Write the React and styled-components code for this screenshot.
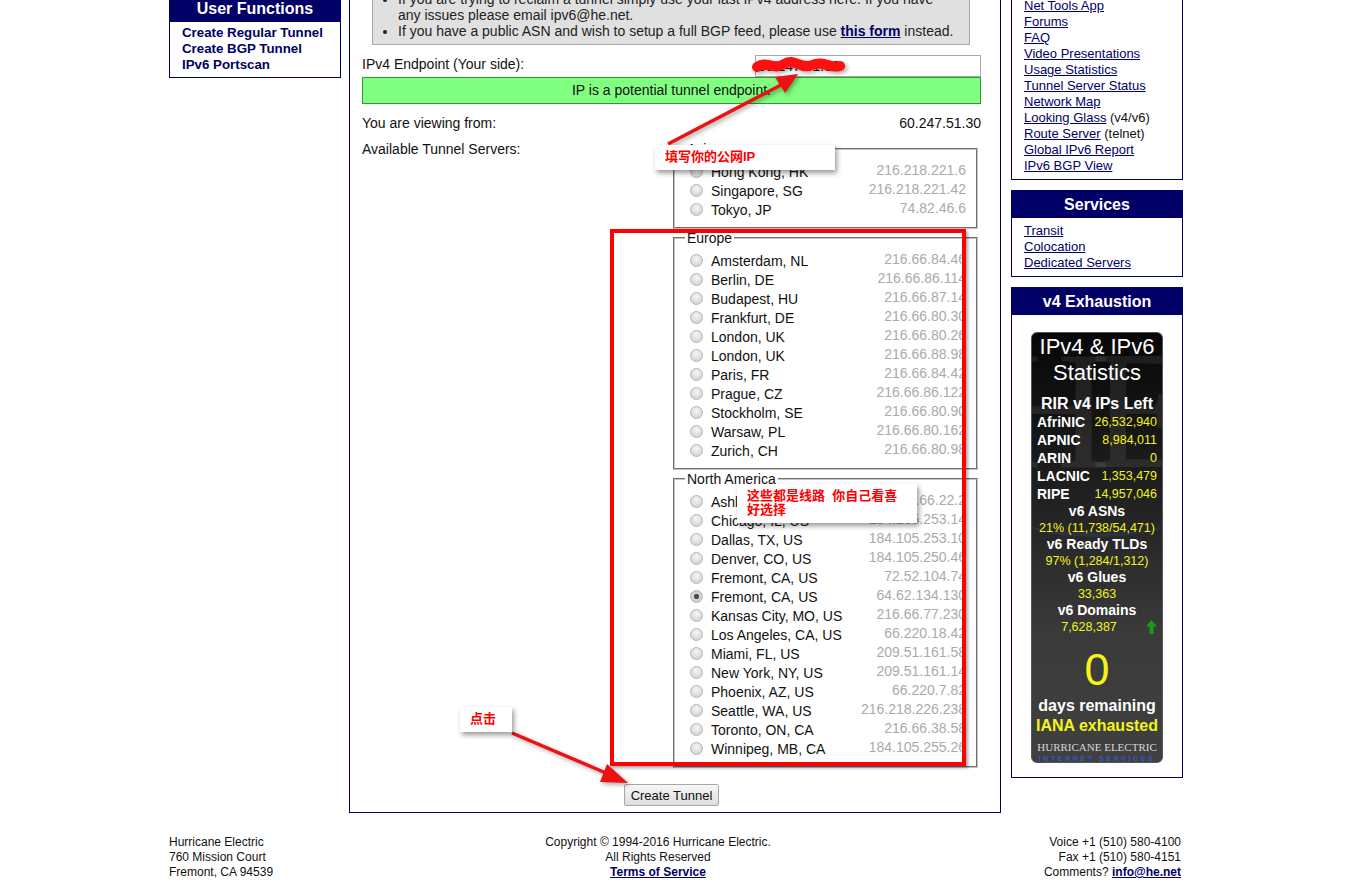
import React from "react";
import styled, { createGlobalStyle } from "styled-components";

const NAVY = "#000066";

const asia = [
    ["Hong Kong, HK", "216.218.221.6"],
    ["Singapore, SG", "216.218.221.42"],
    ["Tokyo, JP", "74.82.46.6"],
];

const europe = [
    ["Amsterdam, NL", "216.66.84.46"],
    ["Berlin, DE", "216.66.86.114"],
    ["Budapest, HU", "216.66.87.14"],
    ["Frankfurt, DE", "216.66.80.30"],
    ["London, UK", "216.66.80.26"],
    ["London, UK", "216.66.88.98"],
    ["Paris, FR", "216.66.84.42"],
    ["Prague, CZ", "216.66.86.122"],
    ["Stockholm, SE", "216.66.80.90"],
    ["Warsaw, PL", "216.66.80.162"],
    ["Zurich, CH", "216.66.80.98"],
];

const northAmerica = [
    ["Ashburn, VA, US", "216.66.22.2"],
    ["Chicago, IL, US", "184.105.253.14"],
    ["Dallas, TX, US", "184.105.253.10"],
    ["Denver, CO, US", "184.105.250.46"],
    ["Fremont, CA, US", "72.52.104.74"],
    ["Fremont, CA, US", "64.62.134.130", true],
    ["Kansas City, MO, US", "216.66.77.230"],
    ["Los Angeles, CA, US", "66.220.18.42"],
    ["Miami, FL, US", "209.51.161.58"],
    ["New York, NY, US", "209.51.161.14"],
    ["Phoenix, AZ, US", "66.220.7.82"],
    ["Seattle, WA, US", "216.218.226.238"],
    ["Toronto, ON, CA", "216.66.38.58"],
    ["Winnipeg, MB, CA", "184.105.255.26"],
];

const rirs = [
    ["AfriNIC", "26,532,940"],
    ["APNIC", "8,984,011"],
    ["ARIN", "0"],
    ["LACNIC", "1,353,479"],
    ["RIPE", "14,957,046"],
];

const toolLinks = [
    ["Net Tools App"],
    ["Forums"],
    ["FAQ"],
    ["Video Presentations"],
    ["Usage Statistics"],
    ["Tunnel Server Status"],
    ["Network Map"],
    ["Looking Glass", "(v4/v6)"],
    ["Route Server", "(telnet)"],
    ["Global IPv6 Report"],
    ["IPv6 BGP View"],
];

const ServerGroup = ({ title, servers }) => {
    return (
        <Fieldset>
            <Legend>{title}</Legend>
            {servers.map(([city, ip, checked], idx) => (
                <ServerRow key={idx}>
                    <Radio type="radio" name="server" defaultChecked={!!checked} />
                    <City>{city}</City>
                    <ServerIp>{ip}</ServerIp>
                </ServerRow>
            ))}
        </Fieldset>
    );
};

const App = () => {
    return (
        <Screen>
            <GlobalStyle />
            <Page>
                <Columns>
                    <LeftColumn>
                        <SideBox $first>
                            <BoxHeader>User Functions</BoxHeader>
                            <FunctionList>
                                <FunctionLink>Create Regular Tunnel</FunctionLink>
                                <FunctionLink>Create BGP Tunnel</FunctionLink>
                                <FunctionLink>IPv6 Portscan</FunctionLink>
                            </FunctionList>
                        </SideBox>
                    </LeftColumn>

                    <MainColumn>
                        <Notice>
                            <li>
                                If you are trying to reclaim a tunnel simply use your last IPv4 address here. If you have
                                <br />
                                any issues please email ipv6@he.net.
                            </li>
                            <li>
                                If you have a public ASN and wish to setup a full BGP feed, please use{" "}
                                <StrongLink>this form</StrongLink> instead.
                            </li>
                        </Notice>

                        <EndpointRow>
                            <FormLabel>IPv4 Endpoint (Your side):</FormLabel>
                            <EndpointInput defaultValue="60.247.51.30" />
                        </EndpointRow>
                        <StatusBar>IP is a potential tunnel endpoint.</StatusBar>

                        <InfoRow $gap={11}>
                            <span>You are viewing from:</span>
                            <span>60.247.51.30</span>
                        </InfoRow>

                        <InfoRow $gap={10}>
                            <span>Available Tunnel Servers:</span>
                            <ServerColumn>
                                <ServerGroup title="Asia" servers={asia} />
                                <ServerGroup title="Europe" servers={europe} />
                                <ServerGroup title="North America" servers={northAmerica} />
                            </ServerColumn>
                        </InfoRow>

                        <ButtonRow>
                            <SubmitButton type="button">Create Tunnel</SubmitButton>
                        </ButtonRow>
                    </MainColumn>

                    <RightColumn>
                        <SideBox $first>
                            <LinkList $top={9}>
                                {toolLinks.map(([label, note]) => (
                                    <LinkItem key={label}>
                                        <SideLink>{label}</SideLink>
                                        {note && <> {note}</>}
                                    </LinkItem>
                                ))}
                            </LinkList>
                        </SideBox>

                        <SideBox>
                            <BoxHeader>Services</BoxHeader>
                            <LinkList $top={5}>
                                <LinkItem>
                                    <SideLink>Transit</SideLink>
                                </LinkItem>
                                <LinkItem>
                                    <SideLink>Colocation</SideLink>
                                </LinkItem>
                                <LinkItem>
                                    <SideLink>Dedicated Servers</SideLink>
                                </LinkItem>
                            </LinkList>
                        </SideBox>

                        <SideBox>
                            <BoxHeader>v4 Exhaustion</BoxHeader>
                            <WidgetHolder>
                                <StatsWidget>
                                    <Watermark aria-hidden="true">HE</Watermark>
                                    <Swoosh />
                                    <WidgetTitle>
                                        IPv4 &amp; IPv6
                                        <br />
                                        Statistics
                                    </WidgetTitle>
                                    <StatHeading $size={16} $top={9}>
                                        RIR v4 IPs Left
                                    </StatHeading>
                                    {rirs.map(([name, count]) => (
                                        <RirRow key={name}>
                                            <RirName>{name}</RirName>
                                            <Yellow>{count}</Yellow>
                                        </RirRow>
                                    ))}
                                    <StatHeading $size={14}>v6 ASNs</StatHeading>
                                    <StatValue>21% (11,738/54,471)</StatValue>
                                    <StatHeading $size={14}>v6 Ready TLDs</StatHeading>
                                    <StatValue>97% (1,284/1,312)</StatValue>
                                    <StatHeading $size={14}>v6 Glues</StatHeading>
                                    <StatValue>33,363</StatValue>
                                    <StatHeading $size={14}>v6 Domains</StatHeading>
                                    <TrendRow>
                                        <StatValue>7,628,387</StatValue>
                                        <svg width="11" height="14" viewBox="0 0 11 14">
                                            <path d="M5.5 0 L11 6.5 L7.5 6.5 L7.5 14 L3.5 14 L3.5 6.5 L0 6.5 Z" fill="#1a9a1a" />
                                        </svg>
                                    </TrendRow>
                                    <BigZero>0</BigZero>
                                    <DaysText $top={1}>days remaining</DaysText>
                                    <DaysText $yellow>IANA exhausted</DaysText>
                                    <BrandName>HURRICANE ELECTRIC</BrandName>
                                    <BrandSub>INTERNET SERVICES</BrandSub>
                                </StatsWidget>
                            </WidgetHolder>
                        </SideBox>
                    </RightColumn>
                </Columns>

                <Footer>
                    <FooterCell>
                        Hurricane Electric
                        <br />
                        760 Mission Court
                        <br />
                        Fremont, CA 94539
                    </FooterCell>
                    <FooterCell $align="center">
                        Copyright © 1994-2016 Hurricane Electric.
                        <br />
                        All Rights Reserved
                        <br />
                        <StrongLink>Terms of Service</StrongLink>
                    </FooterCell>
                    <FooterCell $align="right">
                        Voice +1 (510) 580-4100
                        <br />
                        Fax +1 (510) 580-4151
                        <br />
                        Comments? <StrongLink>info@he.net</StrongLink>
                    </FooterCell>
                </Footer>
            </Page>

            <Highlight />
            <Arrows width="1348" height="888" viewBox="0 0 1348 888">
                <path
                    d="M757 67 C 766 60, 774 71, 784 64 S 800 70, 812 65 S 830 69, 840 66"
                    fill="none"
                    stroke="#ff1010"
                    strokeWidth="10"
                    strokeLinecap="round"
                />
                <line x1="668" y1="144" x2="781" y2="85" stroke="#ee1111" strokeWidth="3.5" />
                <polygon points="798,74 785,93 775,77" fill="#ee1111" />
                <line x1="512" y1="733" x2="606" y2="773" stroke="#ee1111" strokeWidth="3.5" />
                <polygon points="628,783 600,782 607,764" fill="#ee1111" />
            </Arrows>
            <Callout $x={655} $y={145} $w={180}>
                填写你的公网IP
            </Callout>
            <Callout $x={737} $y={484} $w={180}>
                这些都是线路&nbsp;&nbsp;你自己看喜
                <br />
                好选择
            </Callout>
            <Callout $x={460} $y={707} $w={52}>
                点击
            </Callout>
        </Screen>
    );
};

export default App;

const GlobalStyle = createGlobalStyle`
    html, body {
        margin: 0;
        padding: 0;
        background: #ffffff;
    }
    body {
        font-family: "Liberation Sans", Arial, sans-serif;
        color: #000;
        overflow: hidden;
    }
`;

const Screen = styled.div`
    position: relative;
    width: 1348px;
    height: 888px;
    overflow: hidden;
`;

const Page = styled.div`
    width: 1014px;
    margin-left: 169px;
`;

const Columns = styled.div`
    display: flex;
    align-items: flex-start;
`;

const LeftColumn = styled.div`
    width: 172px;
    margin: -6px 8px 0 0;
`;

const RightColumn = styled.div`
    width: 172px;
    margin: -12px 0 0 10px;
`;

const SideBox = styled.div`
    box-sizing: border-box;
    width: 172px;
    border: 1px solid ${NAVY};
    margin-top: ${(p) => (p.$first ? 0 : 10)}px;
`;

const BoxHeader = styled.div`
    height: 27px;
    line-height: 27px;
    background: ${NAVY};
    color: #fff;
    text-align: center;
    font-size: 16px;
    font-weight: 700;
`;

const FunctionList = styled.div`
    display: flex;
    flex-direction: column;
    padding: 3px 0 4px 12px;
`;

const FunctionLink = styled.span`
    font-size: 13.3px;
    line-height: 16px;
    font-weight: 700;
    color: ${NAVY};
`;

const LinkList = styled.div`
    display: flex;
    flex-direction: column;
    align-items: flex-start;
    padding: ${(p) => p.$top}px 0 5px 12px;
`;

const LinkItem = styled.div`
    font-size: 13px;
    line-height: 16px;
    color: #111;
    white-space: nowrap;
`;

const SideLink = styled.span`
    color: ${NAVY};
    text-decoration: underline;
`;

const MainColumn = styled.div`
    box-sizing: border-box;
    width: 652px;
    margin-top: -20px;
    padding: 0 19px 6px 12px;
    border: 1px solid ${NAVY};
    border-top: none;
    font-size: 14px;
    color: #111;
`;

const Notice = styled.ul`
    margin: 0 11px 0 10px;
    padding: 10px 8px 5px 25px;
    background: #e0e0e0;
    border: 1px solid #a8a8a8;
    font-size: 14px;
    line-height: 16px;
    color: #222;
    white-space: nowrap;
`;

const StrongLink = styled.span`
    font-weight: 700;
    color: ${NAVY};
    text-decoration: underline;
`;

const EndpointRow = styled.div`
    display: flex;
    justify-content: space-between;
    align-items: flex-start;
    margin-top: 10px;
`;

const FormLabel = styled.span`
    line-height: 18px;
`;

const EndpointInput = styled.input`
    box-sizing: border-box;
    width: 226px;
    height: 22px;
    border: 1px solid #a9a9a9;
    padding: 0 2px;
    font-family: "Liberation Sans", Arial, sans-serif;
    font-size: 14px;
    color: #111;
`;

const StatusBar = styled.div`
    box-sizing: border-box;
    height: 27px;
    line-height: 25px;
    background: #80ff80;
    border: 1px solid #2d9a2d;
    text-align: center;
    color: #111;
`;

const InfoRow = styled.div`
    display: flex;
    justify-content: space-between;
    align-items: flex-start;
    margin-top: ${(p) => p.$gap}px;
    line-height: 16px;
`;

const ServerColumn = styled.div`
    width: 305px;
    margin-right: 3px;
`;

const Fieldset = styled.fieldset`
    margin: 1px 0 0;
    padding: 5px 10px 8px;
    border: 2px groove #c4c4c4;
    min-width: 0;
    &:first-child {
        margin-top: 0;
    }
`;

const Legend = styled.legend`
    padding: 0 2px;
    font-size: 14px;
    line-height: 16px;
    color: #111;
`;

const ServerRow = styled.div`
    display: flex;
    align-items: center;
    height: 19px;
`;

const Radio = styled.input`
    appearance: none;
    box-sizing: border-box;
    width: 13px;
    height: 13px;
    margin: 0 8px 0 5px;
    border-radius: 50%;
    border: 1px solid #b4b4b4;
    background: radial-gradient(circle at 50% 35%, #f6f6f6 0%, #d6d6d6 75%, #c4c4c4 100%);
    flex-shrink: 0;
    &:checked {
        background: radial-gradient(circle, #444 0, #555 2.4px, #d8d8d8 3px, #c6c6c6 100%);
    }
`;

const City = styled.span`
    color: #111;
    white-space: nowrap;
`;

const ServerIp = styled.span`
    margin: 0 0 4px auto;
    color: #aaaaaa;
    white-space: nowrap;
`;

const ButtonRow = styled.div`
    display: flex;
    justify-content: center;
    margin-top: 16px;
`;

const SubmitButton = styled.button`
    box-sizing: border-box;
    width: 95px;
    height: 22px;
    padding: 0;
    font-family: "Liberation Sans", Arial, sans-serif;
    font-size: 13px;
    color: #111;
    background: linear-gradient(#f7f7f7, #dddddd);
    border: 1px solid #a6a6a6;
    border-radius: 2px;
`;

const WidgetHolder = styled.div`
    display: flex;
    justify-content: center;
    padding: 17px 0 14px;
`;

const StatsWidget = styled.div`
    position: relative;
    box-sizing: border-box;
    width: 132px;
    height: 431px;
    padding-top: 1px;
    overflow: hidden;
    border: 1px solid #555;
    border-radius: 6px;
    background: linear-gradient(#070707 0%, #1e1e1e 35%, #3a3a3a 70%, #404040 100%);
    color: #fff;
    text-align: center;
`;

const Watermark = styled.span`
    position: absolute;
    left: -44px;
    top: -8px;
    font-family: "Liberation Serif", "Times New Roman", serif;
    font-size: 170px;
    line-height: 170px;
    color: rgba(255, 255, 255, 0.08);
    letter-spacing: -20px;
`;

const Swoosh = styled.div`
    position: absolute;
    left: -10px;
    top: 170px;
    width: 150px;
    height: 30px;
    border-radius: 50%;
    border-bottom: 4px solid rgba(70, 90, 160, 0.18);
`;

const WidgetTitle = styled.div`
    position: relative;
    font-size: 22px;
    line-height: 26px;
`;

const StatHeading = styled.div`
    position: relative;
    margin-top: ${(p) => p.$top || 0}px;
    font-size: ${(p) => p.$size}px;
    line-height: ${(p) => (p.$size === 16 ? 18 : 17)}px;
    font-weight: 700;
`;

const RirRow = styled.div`
    position: relative;
    display: flex;
    justify-content: space-between;
    padding: 0 5px;
    line-height: 18px;
`;

const RirName = styled.span`
    font-size: 14px;
    font-weight: 700;
`;

const Yellow = styled.span`
    font-size: 12.5px;
    color: #f4f41a;
`;

const StatValue = styled.div`
    position: relative;
    font-size: 12.5px;
    line-height: 16px;
    color: #f4f41a;
`;

const TrendRow = styled.div`
    display: grid;
    grid-template-columns: 1fr auto;
    align-items: center;
    padding-right: 5px;
`;

const BigZero = styled.div`
    margin-top: 10px;
    font-size: 45px;
    line-height: 50px;
    color: #f4f41a;
`;

const DaysText = styled.div`
    margin-top: ${(p) => p.$top || 0}px;
    font-size: 16px;
    line-height: 20px;
    font-weight: 700;
    color: ${(p) => (p.$yellow ? "#f4f41a" : "#fff")};
`;

const BrandName = styled.div`
    margin-top: 5px;
    font-family: "Liberation Serif", "Times New Roman", serif;
    font-size: 11px;
    line-height: 13px;
    color: #d8d8d8;
`;

const BrandSub = styled.div`
    font-size: 7px;
    line-height: 9px;
    font-weight: 700;
    letter-spacing: 2.6px;
    color: #3158c8;
`;

const Footer = styled.div`
    display: grid;
    grid-template-columns: 300px 378px 1fr;
    margin-top: 22px;
    font-size: 12px;
    line-height: 15px;
    color: #111;
`;

const FooterCell = styled.div`
    text-align: ${(p) => p.$align || "left"};
    padding-right: ${(p) => (p.$align === "right" ? 2 : 0)}px;
    white-space: nowrap;
`;

const Highlight = styled.div`
    position: absolute;
    left: 610px;
    top: 229px;
    box-sizing: border-box;
    width: 356px;
    height: 537px;
    border: 4px solid #ff0000;
    box-shadow: 2px 2px 3px rgba(0, 0, 0, 0.35);
`;

const Arrows = styled.svg`
    position: absolute;
    left: 0;
    top: 0;
    pointer-events: none;
    filter: drop-shadow(2px 2px 2px rgba(0, 0, 0, 0.35));
`;

const Callout = styled.div`
    position: absolute;
    left: ${(p) => p.$x}px;
    top: ${(p) => p.$y}px;
    width: ${(p) => p.$w}px;
    box-sizing: border-box;
    padding: 5px 10px 6px;
    background: #fff;
    box-shadow: 2px 3px 5px rgba(0, 0, 0, 0.4);
    font-family: "Liberation Sans", "Noto Sans CJK SC", sans-serif;
    font-size: 13px;
    line-height: 14px;
    font-weight: 700;
    color: #ff0000;
    white-space: nowrap;
`;
